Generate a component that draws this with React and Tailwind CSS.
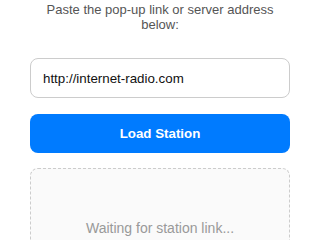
import React from "react";

export default function App() {
  return (
    <div className="w-[320px] h-[240px] overflow-hidden bg-white font-['Liberation_Sans',Arial,sans-serif]">
      <div className="px-[30px] pt-[2px] flex flex-col">
        <p className="text-center text-[13px] leading-[15px] text-[#555]">
          Paste the pop-up link or server address below:
        </p>
        <input
          readOnly
          value="http://internet-radio.com"
          className="mt-[26px] h-[40px] w-full box-border border border-[#ccc] rounded-[8px] px-[12px] text-[13.33px] text-[#111] bg-white outline-none font-['Liberation_Sans',Arial,sans-serif]"
        />
        <button className="mt-[16px] h-[39px] w-full rounded-[8px] bg-[#007bff] text-white font-bold text-[13.33px] font-['Liberation_Sans',Arial,sans-serif]">
          Load Station
        </button>
        <div className="mt-[15px] h-[120px] shrink-0 border border-dashed border-[#ccc] rounded-[8px] bg-[#fafafa] flex items-center justify-center text-[14px] text-[#999]">
          Waiting for station link...
        </div>
      </div>
    </div>
  );
}
